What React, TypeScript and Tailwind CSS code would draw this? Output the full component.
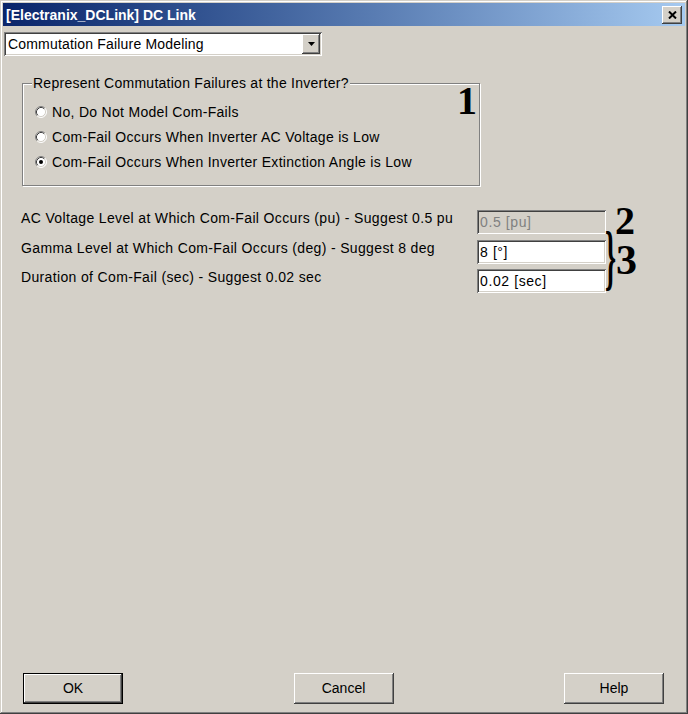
import React from "react";

const FONT = { fontFamily: '"Liberation Sans", Arial, sans-serif' };

const raised =
  "shadow-[inset_-1px_-1px_#404040,inset_1px_1px_#ffffff,inset_-2px_-2px_#808080,inset_2px_2px_#d4d0c8]";
const sunken =
  "shadow-[inset_1px_1px_#808080,inset_-1px_-1px_#ffffff,inset_2px_2px_#404040,inset_-2px_-2px_#d4d0c8]";

function Radio({ checked }: { checked?: boolean }) {
  return (
    <svg width="12" height="12" viewBox="0 0 12 12" className="shrink-0">
      <circle cx="6" cy="6" r="5" fill="#ffffff" />
      <path d="M2.11 9.89A5.5 5.5 0 0 1 9.89 2.11" stroke="#808080" fill="none" />
      <path d="M9.89 2.11A5.5 5.5 0 0 1 2.11 9.89" stroke="#ffffff" fill="none" />
      <path d="M2.82 9.18A4.5 4.5 0 0 1 9.18 2.82" stroke="#404040" fill="none" />
      <path d="M9.18 2.82A4.5 4.5 0 0 1 2.82 9.18" stroke="#d4d0c8" fill="none" />
      {checked && <circle cx="6" cy="6" r="2" fill="#000000" />}
    </svg>
  );
}

function Field({ value, disabled }: { value: string; disabled?: boolean }) {
  return (
    <div
      className={`w-[129px] h-[24px] flex items-center pl-[3px] text-[14px] leading-[16px] tracking-[0.6px] shrink-0 ${sunken} ${
        disabled ? "bg-[#d4d0c8] text-[#808080]" : "bg-white text-black"
      }`}
    >
      {value}
    </div>
  );
}

function Button({ label, primary }: { label: string; primary?: boolean }) {
  return (
    <div
      className={`w-[100px] h-[31px] flex items-center justify-center text-[14px] text-black ${
        primary ? "border border-black" : ""
      }`}
    >
      <div className={`w-full h-full flex items-center justify-center ${raised}`}>{label}</div>
    </div>
  );
}

const SERIF = { fontFamily: '"Liberation Serif", "Times New Roman", serif' };

export default function App() {
  return (
    <div
      style={FONT}
      className="w-[688px] h-[714px] bg-[#d4d0c8] p-[3px] flex flex-col shadow-[inset_-1px_-1px_#404040,inset_1px_1px_#d4d0c8,inset_-2px_-2px_#808080,inset_2px_2px_#ffffff]"
    >
      {/* Title bar */}
      <div className="h-[23px] shrink-0 flex items-center justify-between pl-[3px] pr-[3px] bg-gradient-to-r from-[#0a246a] to-[#a6caf0]">
        <span className="text-white font-bold text-[14px] leading-[16px]">[Electranix_DCLink] DC Link</span>
        <div className={`w-[20px] h-[18px] bg-[#d4d0c8] flex items-center justify-center ${raised}`}>
          <svg width="9" height="8" viewBox="0 0 9 8">
            <path d="M1 0.5L8 7.5M8 0.5L1 7.5" stroke="#000" strokeWidth="2" />
          </svg>
        </div>
      </div>

      <div className="flex-1 flex flex-col">
        {/* Page selector */}
        <div className={`mt-[6px] ml-[1px] w-[318px] h-[24px] bg-white flex items-center justify-between p-[2px] ${sunken}`}>
          <span className="pl-[2px] text-[14px] leading-[16px] tracking-[0.18px] text-black">Commutation Failure Modeling</span>
          <div className={`w-[18px] h-[20px] bg-[#d4d0c8] flex items-center justify-center ${raised}`}>
            <svg width="7" height="4" viewBox="0 0 7 4">
              <path d="M0 0H7L3.5 4Z" fill="#000" />
            </svg>
          </div>
        </div>

        {/* Group box */}
        <div className="relative mt-[27px] ml-[19px] w-[458px] h-[103px] border border-[#808080] shadow-[1px_1px_0_#ffffff,inset_1px_1px_0_#ffffff]">
          <span className="absolute left-[9px] top-[-9px] px-[1px] bg-[#d4d0c8] text-[14px] leading-[17px] tracking-[0.26px] text-black">
            Represent Commutation Failures at the Inverter?
          </span>
          <span style={SERIF} className="absolute left-[434px] top-[-3px] text-[40px] leading-[40px] font-bold text-black">
            1
          </span>
          <div className="flex flex-col pt-[15px] pl-[12px]">
            {[
              ["No, Do Not Model Com-Fails", false],
              ["Com-Fail Occurs When Inverter AC Voltage is Low", false],
              ["Com-Fail Occurs When Inverter Extinction Angle is Low", true],
            ].map(([label, checked]) => (
              <div key={label as string} className="h-[25px] flex items-center gap-[5px]">
                <Radio checked={checked as boolean} />
                <span className="text-[14px] leading-[16px] tracking-[0.3px] text-black">{label}</span>
              </div>
            ))}
          </div>
        </div>

        {/* Parameter rows */}
        <div className="relative mt-[24px] ml-[18px] flex flex-col text-[14px] leading-[16px] text-black">
          <div className="flex items-start">
            <span className="w-[456px] tracking-[0.35px]">AC Voltage Level at Which Com-Fail Occurs (pu) - Suggest 0.5 pu</span>
            <Field value="0.5 [pu]" disabled />
          </div>
          <div className="flex items-start mt-[6px]">
            <span className="w-[456px] tracking-[0.35px]">Gamma Level at Which Com-Fail Occurs (deg) - Suggest 8 deg</span>
            <Field value="8 [°]" />
          </div>
          <div className="flex items-start mt-[5px]">
            <span className="w-[456px] tracking-[0.35px]">Duration of Com-Fail (sec) - Suggest 0.02 sec</span>
            <Field value="0.02 [sec]" />
          </div>
          <span style={SERIF} className="absolute left-[594px] top-[-9px] text-[40px] leading-[40px] font-bold">
            2
          </span>
          <span
            style={SERIF}
            className="absolute left-[584px] top-[12px] text-[28px] leading-[28px] font-bold scale-y-[2.55] origin-top"
          >
            {"}"}
          </span>
          <span style={SERIF} className="absolute left-[595px] top-[29px] text-[42px] leading-[42px] font-bold">
            3
          </span>
        </div>

        <div className="flex-1" />

        {/* Buttons */}
        <div className="flex justify-between pl-[20px] pr-[21px] mb-[7px]">
          <Button label="OK" primary />
          <Button label="Cancel" />
          <Button label="Help" />
        </div>
      </div>
    </div>
  );
}
